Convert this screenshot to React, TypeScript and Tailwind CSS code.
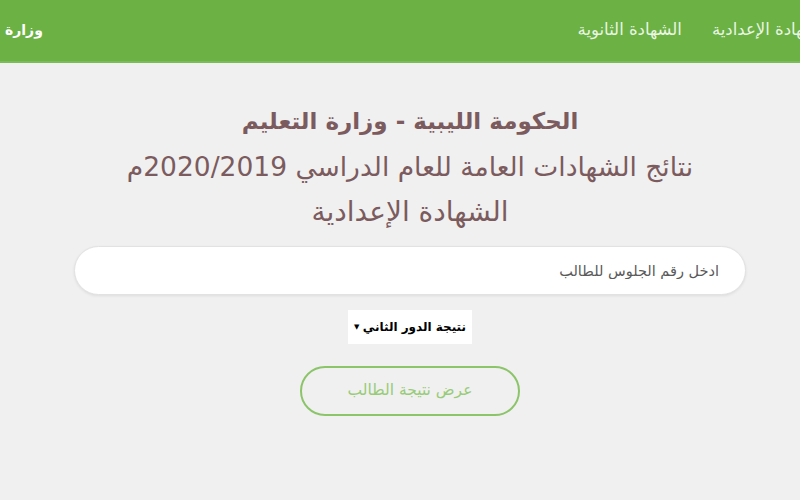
import React from 'react';

const navLinks = ['الشهادة الإعدادية', 'الشهادة الثانوية'];

export default function App() {
  return (
    <div dir="rtl" className="w-[800px] h-[500px] overflow-hidden bg-[#f0f0f0] font-['DejaVu_Sans',sans-serif]">
      <header className="h-[63px] bg-[#6bb144] border-b-2 border-[#7cbc58] flex items-center justify-between overflow-hidden">
        <nav className="flex items-center gap-[30px] -mr-[28px] text-[16.5px] text-[#eaf5e2] whitespace-nowrap">
          {navLinks.map((l) => (
            <span key={l}>{l}</span>
          ))}
        </nav>
        <span className="ml-[5px] text-[14px] font-bold text-white">وزارة</span>
      </header>

      <main className="pl-[20px] flex flex-col items-center">
        <div className="mt-[36px] flex flex-col items-center text-[#7b5b5e] leading-[45px]">
          <h1 className="text-[23px] font-bold">الحكومة الليبية - وزارة التعليم</h1>
          <h2 className="text-[26.5px]">نتائج الشهادات العامة للعام الدراسي 2020/2019م</h2>
          <h3 className="text-[28px]">الشهادة الإعدادية</h3>
        </div>

        <input
          type="text"
          placeholder="ادخل رقم الجلوس للطالب"
          className="mt-[12px] w-[672px] h-[49px] rounded-full bg-white border border-[#e2e2e2] shadow-[0_1px_3px_rgba(0,0,0,0.08)] px-[26px] text-[14.5px] placeholder:text-[#5a5a5a] outline-none"
        />

        <div className="mt-[15px] w-[124px] h-[34px] bg-white flex items-center justify-between px-[6px] text-[12px] font-bold text-black whitespace-nowrap">
          <span>نتيجة الدور الثاني</span>
          <span className="text-[7px]">▼</span>
        </div>

        <button className="mt-[22px] w-[220px] h-[50px] rounded-full border-2 border-[#8cc46a] text-[#98cb78] text-[15.5px]">
          عرض نتيجة الطالب
        </button>
      </main>
    </div>
  );
}
